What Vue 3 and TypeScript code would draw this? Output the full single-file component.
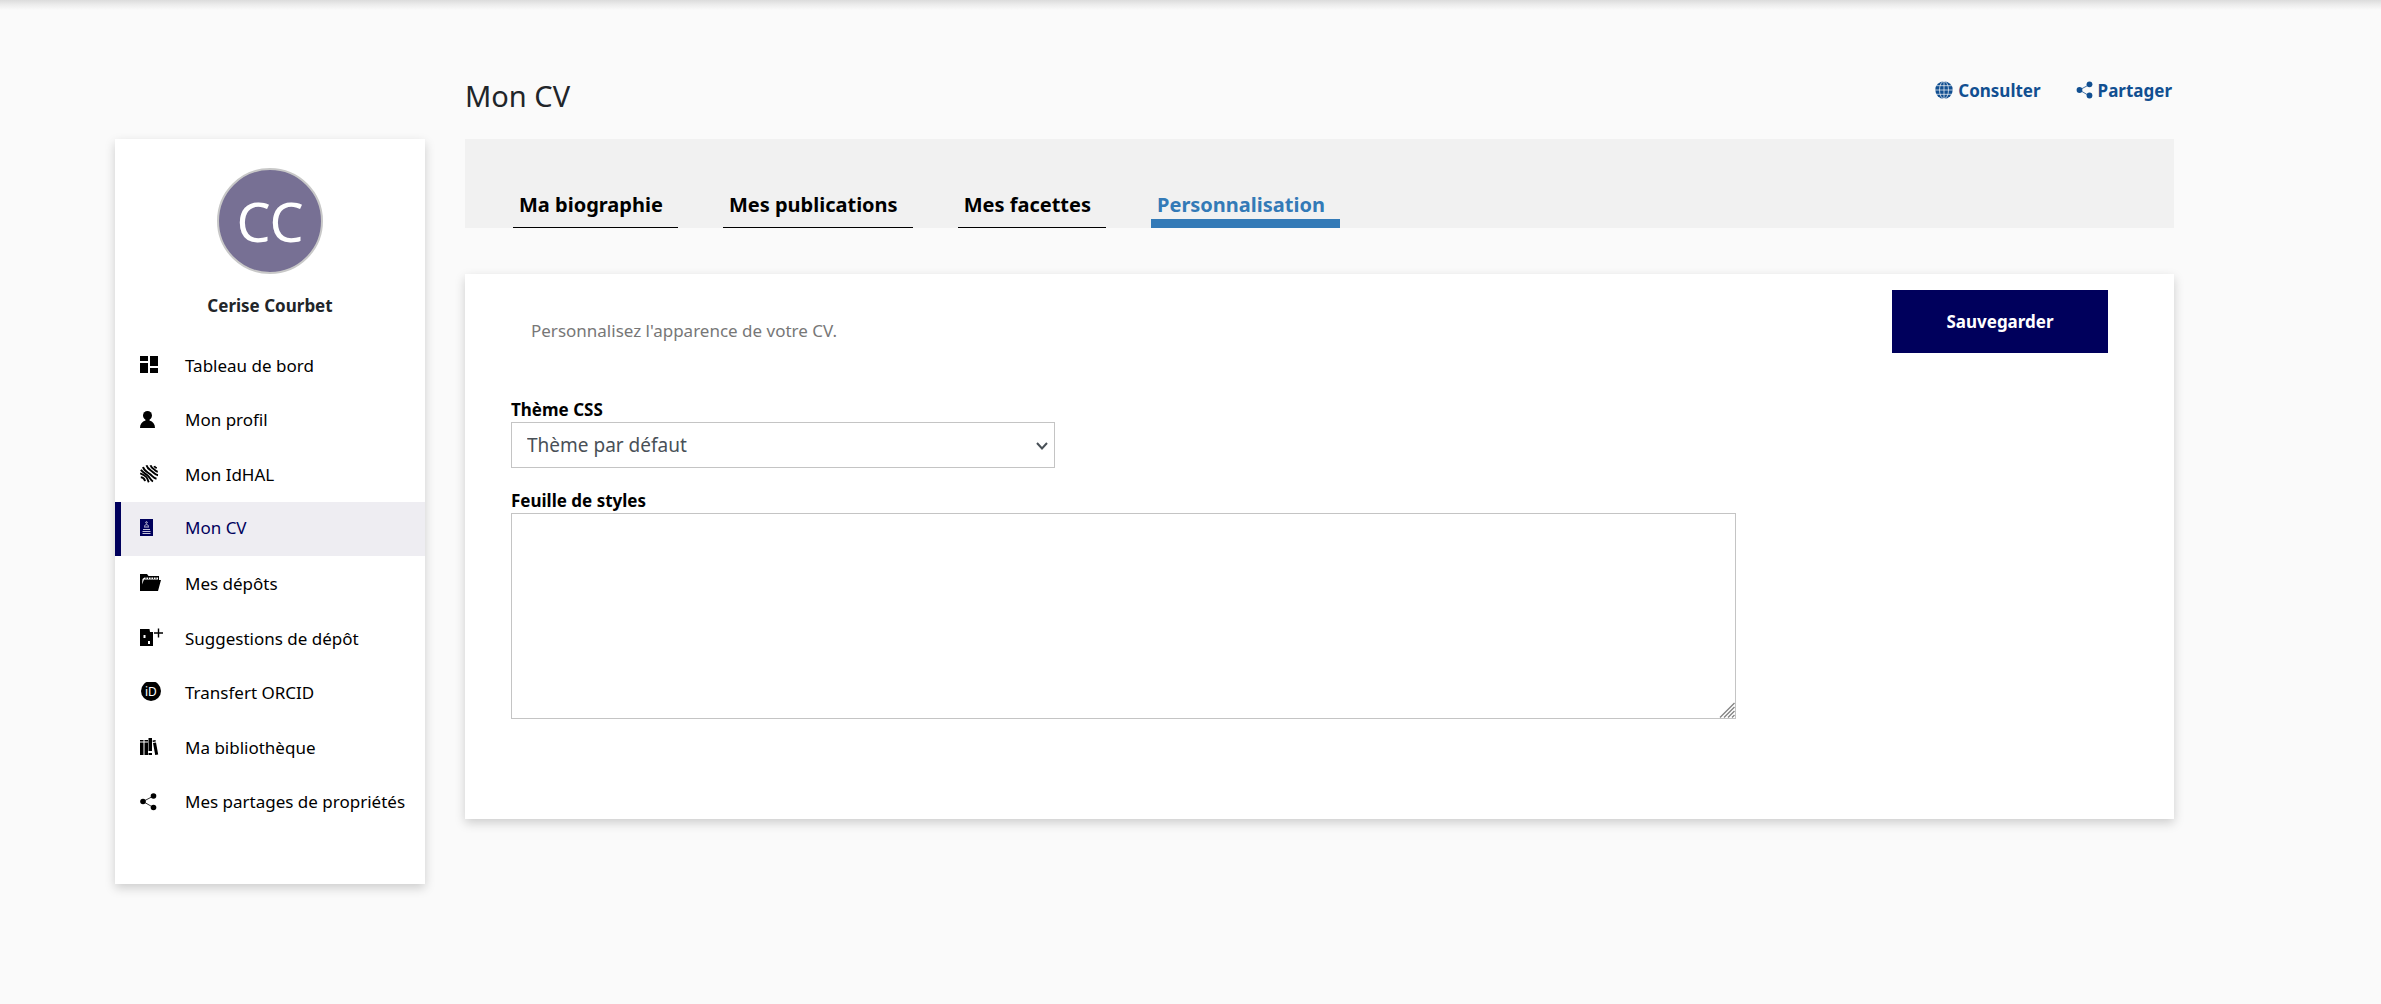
<script setup lang="ts">
import { ref } from 'vue'

type IconName =
  | 'dashboard' | 'user' | 'fingerprint' | 'cv' | 'folder'
  | 'suggestion' | 'orcid' | 'library' | 'share'

interface MenuEntry {
  label: string
  icon: IconName
}

const menu: MenuEntry[] = [
  { label: 'Tableau de bord', icon: 'dashboard' },
  { label: 'Mon profil', icon: 'user' },
  { label: 'Mon IdHAL', icon: 'fingerprint' },
  { label: 'Mon CV', icon: 'cv' },
  { label: 'Mes dépôts', icon: 'folder' },
  { label: 'Suggestions de dépôt', icon: 'suggestion' },
  { label: 'Transfert ORCID', icon: 'orcid' },
  { label: 'Ma bibliothèque', icon: 'library' },
  { label: 'Mes partages de propriétés', icon: 'share' },
]
const currentPage = 'Mon CV'

const tabs: string[] = ['Ma biographie', 'Mes publications', 'Mes facettes', 'Personnalisation']
const currentTab = ref('Personnalisation')

const theme = ref('default')
const css = ref('')
</script>

<template>
  <div class="page">
    <aside class="sidebar">
      <div class="avatar">CC</div>
      <p class="name">Cerise Courbet</p>
      <nav>
        <ul class="menu">
          <li v-for="entry in menu" :key="entry.label">
            <a href="#" class="menu-link" :class="{ active: entry.label === currentPage }">
              <svg class="menu-icon" viewBox="0 0 24 22" aria-hidden="true">
                <g v-if="entry.icon === 'dashboard'">
                  <path d="M0 2h8v5H0zM0 9h8v10H0zM10 2h8v10h-8zM10 14h8v5h-8z" />
                </g>
                <g v-else-if="entry.icon === 'user'">
                  <circle cx="7.5" cy="6.5" r="4.5" />
                  <path d="M5.5 10h4v1.500C13 12.500 15 15 15 19H0c0-4 2-6.500 5.500-7.500z" />
                </g>
                <g v-else-if="entry.icon === 'fingerprint'" fill="none" stroke="currentColor" stroke-width="1.900">
                  <path d="M6.500 2.200C7.500 6 10.500 7 13 9.300S16 12 18 12.200" />
                  <path d="M10.500 2.200c.8 2.600 2.800 3.600 4.300 4.800s1.700 1.500 3 1.700" />
                  <path d="M14.300 3c.4 1 1.200 1.600 2.400 2.200" />
                  <path d="M3 4C4 8 8 9.300 10.500 11.500S13.500 15.200 16.500 15.800" />
                  <path d="M.9 6.700C3 10 6.500 11 8.500 13.300s2 4 4.500 5.200" />
                  <path d="M.2 10.300C3 11.300 5 12.300 6.500 14.300s1.300 3.400 2.300 5" />
                  <path d="M.8 14.200c2.400.2 3.800 1.200 4.200 4" />
                </g>
                <g v-else-if="entry.icon === 'cv'">
                  <path d="M0 2h13v17H0z" />
                  <g fill="none" stroke="#c4c3da">
                    <circle cx="6.500" cy="5.500" r=".8" />
                    <path d="M4 10h5M4.500 9.500C4.500 7 8.500 7 8.500 9.500M3 12.500h7M2.500 14.500h8M2.500 16.500h8" />
                  </g>
                </g>
                <g v-else-if="entry.icon === 'folder'">
                  <path d="M0 19V2h7l1.500 2H19v4h2l-3 11z" />
                  <path d="M2 12.500 4 7.500h14V5.500H4.500L2.500 7z" fill="#fff" />
                  <path d="M6 5v2M8.500 5v2M11 5v2M13.500 5v2M16 5v2" stroke="currentColor" stroke-width=".8" />
                </g>
                <g v-else-if="entry.icon === 'suggestion'">
                  <path d="M0 2h9.500l.5 3h3v14H0z" />
                  <path d="M10.500 2 13 4.300h-2.500zM3.500 8h2v3h-2zM8 14h2v3H8z" fill="#fff" />
                  <path d="M14 6h9M18.500 1.500v9" stroke="currentColor" stroke-width="1.400" />
                </g>
                <g v-else-if="entry.icon === 'orcid'">
                  <circle cx="11" cy="9" r="10" />
                  <text x="5" y="13.500" class="orcid-mark">iD</text>
                </g>
                <g v-else-if="entry.icon === 'library'">
                  <path d="M0 4h3.500v1.500H0zM0 6.500h3.500V19H0zM4.500 4H8v1.500H4.500zM4.500 6.500H8V19H4.500zM8.500 2h3.500v13H8.500zM8.500 17h3.500v2H8.500zM12.500 4.500l3-.6.300 1.500-3 .6zM13 7l3-.6 2.200 12.100-3 .5z" />
                </g>
                <g v-else>
                  <path d="M13.500 5 3 10.500l10.500 6" fill="none" stroke="currentColor" stroke-width=".8" />
                  <circle cx="3" cy="10.500" r="2.800" />
                  <circle cx="13.500" cy="5" r="2.800" />
                  <circle cx="13.500" cy="16.500" r="2.800" />
                </g>
              </svg>
              <span>{{ entry.label }}</span>
            </a>
          </li>
        </ul>
      </nav>
    </aside>

    <main class="main">
      <header class="heading">
        <h1>{{ currentPage }}</h1>
        <div class="actions">
          <a href="#" class="action">
            <svg width="18" height="18" viewBox="0 0 18 18" aria-hidden="true">
              <circle cx="9" cy="9" r="8.700" fill="currentColor" />
              <g fill="none" stroke="#fafafa" stroke-width=".7">
                <path d="M9 0v18M0 9h18M1.500 4.700h15M1.500 13.300h15" />
                <ellipse cx="9" cy="9" rx="4.500" ry="8.700" />
              </g>
            </svg>
            <span>Consulter</span>
          </a>
          <a href="#" class="action">
            <svg width="17" height="18" viewBox="0 0 17 18" aria-hidden="true">
              <path d="M13.500 3.500 3.500 9l10 6" fill="none" stroke="currentColor" stroke-width=".8" />
              <g fill="currentColor">
                <circle cx="3.500" cy="9" r="2.900" />
                <circle cx="13.500" cy="3.300" r="2.900" />
                <circle cx="13.500" cy="14.500" r="2.900" />
              </g>
            </svg>
            <span>Partager</span>
          </a>
        </div>
      </header>

      <nav class="tabs">
        <a
          v-for="tab in tabs"
          :key="tab"
          href="#"
          class="tab"
          :class="{ active: tab === currentTab }"
          @click.prevent="currentTab = tab"
        >{{ tab }}</a>
      </nav>

      <form class="panel" @submit.prevent>
        <div class="intro">
          <p>Personnalisez l'apparence de votre CV.</p>
          <button type="submit" class="save">Sauvegarder</button>
        </div>
        <div class="field">
          <label for="theme">Thème CSS</label>
          <div class="picker">
            <select id="theme" v-model="theme">
              <option value="default">Thème par défaut</option>
            </select>
            <svg class="chevron" viewBox="0 0 12 8" aria-hidden="true">
              <path d="M1 1l5 5.500L11 1" fill="none" stroke="#495057" stroke-width="2" />
            </svg>
          </div>
        </div>
        <div class="field">
          <label for="css">Feuille de styles</label>
          <div class="editor">
            <textarea id="css" v-model="css"></textarea>
            <svg class="grip" viewBox="0 0 16 16" aria-hidden="true">
              <path d="M0 0h16v16H0z" fill="#fff" />
              <path d="M1 15.500 15.500 1M5 15.500 15.500 5M9 15.500 15.500 9M13 15.500l2.500-2.500" stroke="#858585" stroke-width="1.400" />
            </svg>
          </div>
        </div>
      </form>
    </main>
  </div>
</template>

<style>
body {
  background: #fafafa;
}
</style>

<style scoped>
* {
  box-sizing: border-box;
}

.page {
  display: flex;
  align-items: flex-start;
  gap: 40px;
  padding: 70px 207px 120px 115px;
  background: linear-gradient(#dcdcdc, #ededed 5px, #fafafa 10px);
  color: #212529;
  font: 17px/24px "Noto Sans", sans-serif;
}

a {
  color: inherit;
  text-decoration: none;
}

.sidebar {
  flex: 0 0 310px;
  margin-top: 69px;
  padding: 29px 0 55px;
  background: #fff;
  box-shadow: 0 4px 10px rgba(0, 0, 0, 0.18);
}

.avatar {
  display: flex;
  align-items: center;
  justify-content: center;
  width: 106px;
  height: 106px;
  margin: 0 auto;
  border: 2px solid #c8c8c8;
  border-radius: 50%;
  background: #777094;
  color: #fff;
  font-size: 54px;
}

.name {
  margin: 20px 0;
  font-weight: 700;
  text-align: center;
}

.menu {
  display: grid;
  grid-auto-rows: 1fr;
  min-height: 491px;
  margin: 0;
  padding: 0;
  list-style: none;
}

.menu-link {
  display: flex;
  align-items: center;
  gap: 21px;
  height: 100%;
  padding-left: 19px;
  border-left: 6px solid transparent;
  color: #000;
  white-space: nowrap;
}

.menu-link span {
  padding-top: 1px;
}

.menu-link.active {
  padding-bottom: 2px;
  border-color: #00005c;
  background: #eeedf2;
  color: #00005c;
}

.menu-icon {
  width: 24px;
  height: 22px;
  fill: currentColor;
}

.orcid-mark {
  fill: #fff;
  font-size: 12px;
}

.main {
  flex: 1;
  min-width: 0;
}

.heading {
  display: flex;
  align-items: flex-start;
  justify-content: space-between;
  height: 69px;
  padding-right: 2px;
}

h1 {
  margin: 6px 0 0;
  font-size: 29px;
  font-weight: 400;
  line-height: 40px;
}

.actions {
  display: flex;
  gap: 35px;
  padding-top: 9px;
}

.action {
  display: flex;
  gap: 5px;
  color: #114f91;
  font-weight: 700;
}

.action svg {
  margin-top: 2px;
}

.tabs {
  display: flex;
  align-items: flex-end;
  gap: 45px;
  height: 89px;
  padding-left: 48px;
  background: #f1f1f1;
}

.tab {
  height: 40px;
  padding: 3px 15px 0 6px;
  border-bottom: 1px solid #000;
  color: #000;
  font-size: 20px;
  font-weight: 700;
  line-height: 28px;
}

.tab.active {
  border-bottom: 9px solid #337ab7;
  color: #337ab7;
}

.panel {
  margin-top: 46px;
  padding: 16px 30px 100px 46px;
  background: #fff;
  box-shadow: 0 4px 10px rgba(0, 0, 0, 0.18);
}

.intro {
  display: flex;
  align-items: flex-start;
  justify-content: space-between;
  margin-bottom: 45px;
  padding: 0 36px 0 20px;
}

.intro p {
  margin: 29px 0 0;
  color: #777;
}

.save {
  width: 216px;
  height: 63px;
  border: 0;
  background: #00005c;
  color: #fff;
  font: inherit;
  font-weight: 700;
}

.field + .field {
  margin-top: 21px;
}

.field label {
  display: block;
  color: #000;
  font-weight: 700;
}

.picker {
  position: relative;
  width: 33.333%;
}

select {
  display: block;
  width: 100%;
  height: 46px;
  padding: 0 30px 0 15px;
  border: 1px solid #c4c4c4;
  border-radius: 0;
  appearance: none;
  background: #fff;
  color: #495057;
  font: inherit;
  font-size: 19px;
}

.chevron {
  position: absolute;
  top: 20px;
  right: 7px;
  width: 12px;
  height: 8px;
  pointer-events: none;
}

.editor {
  position: relative;
  width: 75%;
}

textarea {
  display: block;
  width: 100%;
  height: 206px;
  padding: 12px;
  border: 1px solid #c4c4c4;
  background: #fff;
  font: inherit;
  resize: vertical;
}

.grip {
  position: absolute;
  right: 1px;
  bottom: 1px;
  width: 16px;
  height: 16px;
  pointer-events: none;
}
</style>
